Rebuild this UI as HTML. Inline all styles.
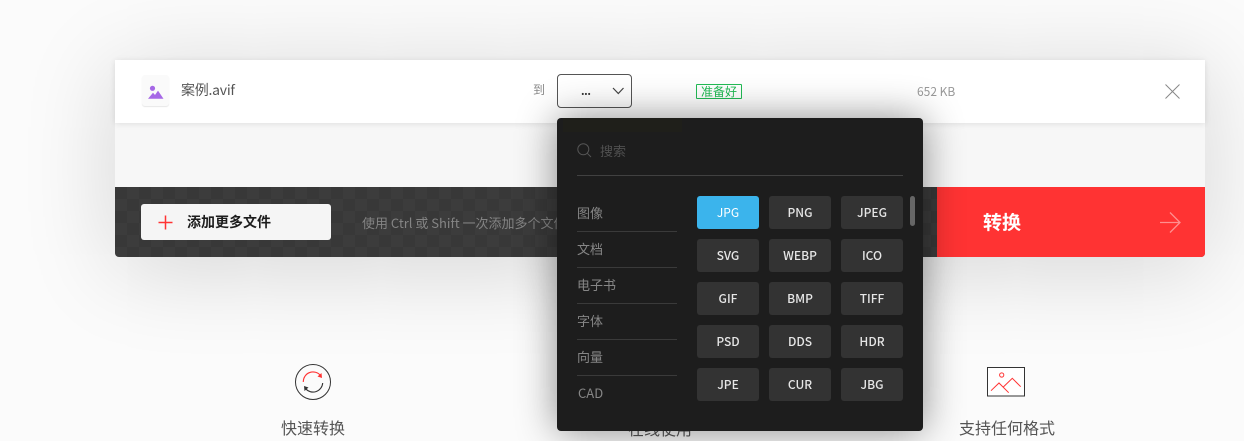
<!DOCTYPE html>
<html lang="zh"><head><meta charset="utf-8"><title>转换</title>
<style>
*{box-sizing:border-box;margin:0;padding:0}
html,body{width:1244px;height:441px;overflow:hidden}
body{background:#fbfbfb;position:relative;font-family:"Noto Sans CJK SC","Liberation Sans",sans-serif}
div,span{position:absolute;white-space:nowrap}
svg{position:absolute;overflow:visible}
.card{left:115px;top:60px;width:1090px;height:197px;background:#f7f7f7;border-radius:0 0 4px 4px;box-shadow:0 10px 90px rgba(0,0,0,.17)}
.row{left:115px;top:60px;width:1090px;height:63px;background:#fff;box-shadow:0 1px 6px rgba(0,0,0,.1)}
.bar{left:115px;top:187px;width:1090px;height:70px;border-radius:0 0 4px 4px;overflow:hidden;background:conic-gradient(#3c3c3c 25%,#383838 0 50%,#3c3c3c 0 75%,#383838 0) 0 0/24px 24px}
.red{left:937px;top:187px;width:268px;height:70px;background:#ff3333;border-radius:0 0 4px 0}
.add{left:141px;top:204px;width:190px;height:36px;background:#f5f5f5;border-radius:3px}
.drop{left:557px;top:118px;width:366px;height:313px;background:#1d1d1d;border-radius:4px;box-shadow:0 0 40px rgba(0,0,0,.45)}
.cat{left:577px;font-size:13px;line-height:18px;color:#868686}
.sep{left:577px;width:100px;height:1px;background:#3a3a3a}
.b{width:62px;height:33px;background:#333;border-radius:3px;color:#e6e6e6;font-size:12px;font-weight:500;line-height:33px;text-align:center}
.t{font-size:16px;line-height:20px;color:#555;text-align:center}
</style></head><body>
<div class="t" style="left:613px;top:418px;width:94px">在线使用</div>
<div class="card"></div>
<div class="row"></div>
<div style="left:142px;top:75px;width:27px;height:31px;background:#fafafa;border-radius:3px;box-shadow:0 1px 1px rgba(0,0,0,.1)"></div>
<svg style="left:148px;top:84px" width="16" height="15" viewBox="0 0 16 15"><circle cx="4.500" cy="4.300" r="2.600" fill="#a668e6"/><path d="M0 14.700L5 8.800 7 11 10 6.600 15.500 14.700Z" fill="#a668e6"/></svg>
<div style="left:181px;top:80px;font-size:14px;line-height:20px;color:#555;letter-spacing:-.25px">案例.avif</div>
<div style="left:533px;top:81px;font-size:12px;line-height:18px;color:#888">到</div>
<div style="left:557px;top:74px;width:75px;height:34px;border:1px solid #555;border-radius:4px;background:transparent"></div>
<div style="left:581px;top:82px;font-size:11px;line-height:18px;color:#333;font-weight:700;letter-spacing:-.4px">...</div>
<svg style="left:612px;top:87px" width="13" height="8" viewBox="0 0 13 8"><path d="M1 1L6.300 6.500 11.500 1" fill="none" stroke="#444" stroke-width="1.200"/></svg>
<div style="left:696px;top:84px;width:46px;height:15px;border:1px solid #22bb55;border-radius:1px;color:#22bb55;font-size:12px;line-height:13px;text-align:center">准备好</div>
<div style="left:917px;top:83px;font-size:12px;line-height:17px;color:#999">652 KB</div>
<svg style="left:1165px;top:84px" width="15" height="15" viewBox="0 0 15 15"><path d="M.5.500L14.500 14.500M14.500.500L.5 14.500" stroke="#888" stroke-width="1" fill="none"/></svg>
<div class="bar"></div>
<div class="red"></div>
<div class="add"></div>
<svg style="left:158px;top:215px" width="15" height="15" viewBox="0 0 15 15"><path d="M7.500.500V14.500M.5 7.500H14.500" stroke="#ff3333" stroke-width="1.500" fill="none"/></svg>
<div style="left:187px;top:212px;font-size:14px;line-height:20px;font-weight:700;color:#1c1c1c">添加更多文件</div>
<div style="left:362px;top:213px;font-size:13px;line-height:19px;color:#848484;width:195px;overflow:hidden">使用 Ctrl 或 Shift 一次添加多个文件</div>
<div style="left:983px;top:209px;font-size:19px;line-height:26px;font-weight:700;color:#fff">转换</div>
<svg style="left:1160px;top:211px" width="21" height="23" viewBox="0 0 21 23"><path d="M0 11.500H20M10 1.500L20 11.500 10 21.500" fill="none" stroke="#ff9090" stroke-width="1.300"/></svg>
<svg style="left:295px;top:364px" width="36" height="36" viewBox="0 0 36 36"><circle cx="18" cy="18" r="17.500" fill="none" stroke="#333" stroke-width="1"/><path d="M8.300 18A9.700 9.700 0 0 1 25.500 11.500" fill="none" stroke="#ff3333" stroke-width="1.100"/><path d="M22.500 12.500L27 14 26.500 9Z" fill="#ff3333"/><path d="M27.700 19A9.700 9.700 0 0 1 10.500 24.500" fill="none" stroke="#333" stroke-width="1.100"/><path d="M13.500 23.500L9 22 9.500 27Z" fill="#333"/></svg>
<div class="t" style="left:266px;top:417px;width:94px">快速转换</div>
<svg style="left:987px;top:367px" width="38" height="30" viewBox="0 0 38 30"><rect x=".5" y=".5" width="37" height="28.500" fill="#fff" stroke="#333" stroke-width="1"/><circle cx="14.700" cy="8" r="2.100" fill="none" stroke="#ff3333" stroke-width="1"/><path d="M4 23.700L12 16 21.700 25.700M16.300 20L25.300 11.300 33.700 19.700" fill="none" stroke="#ff3333" stroke-width="1"/></svg>
<div class="t" style="left:959px;top:417px;width:94px">支持任何格式</div>
<div class="drop"></div>
<div style="left:563px;top:118px;width:119px;height:14px;background:#1f1f1a"></div>
<svg style="left:577px;top:143px" width="15" height="15" viewBox="0 0 15 15"><circle cx="6.300" cy="6.300" r="5.500" fill="none" stroke="#555" stroke-width="1"/><path d="M10.300 10.300L14 14" stroke="#555" stroke-width="1"/></svg>
<div style="left:600px;top:142px;font-size:13px;line-height:18px;color:#505050">搜索</div>
<div style="left:577px;top:175px;width:326px;height:1px;background:#414141"></div>
<div class="cat" style="top:204px">图像</div><div class="sep" style="top:231px"></div>
<div class="cat" style="top:240px">文档</div><div class="sep" style="top:267px"></div>
<div class="cat" style="top:276px">电子书</div><div class="sep" style="top:303px"></div>
<div class="cat" style="top:312px">字体</div><div class="sep" style="top:339px"></div>
<div class="cat" style="top:348px">向量</div><div class="sep" style="top:375px"></div>
<div class="cat" style="top:384px;left:578px">CAD</div>
<div class="b" style="left:697px;top:196px;background:#3bb4ec;color:#fff;font-weight:400">JPG</div>
<div class="b" style="left:769px;top:196px">PNG</div>
<div class="b" style="left:841px;top:196px">JPEG</div>
<div class="b" style="left:697px;top:239px">SVG</div>
<div class="b" style="left:769px;top:239px">WEBP</div>
<div class="b" style="left:841px;top:239px">ICO</div>
<div class="b" style="left:697px;top:282px">GIF</div>
<div class="b" style="left:769px;top:282px">BMP</div>
<div class="b" style="left:841px;top:282px">TIFF</div>
<div class="b" style="left:697px;top:325px">PSD</div>
<div class="b" style="left:769px;top:325px">DDS</div>
<div class="b" style="left:841px;top:325px">HDR</div>
<div class="b" style="left:697px;top:368px">JPE</div>
<div class="b" style="left:769px;top:368px">CUR</div>
<div class="b" style="left:841px;top:368px">JBG</div>
<div style="left:910px;top:196px;width:5px;height:30px;background:#666;border-radius:3px"></div>
</body></html>
